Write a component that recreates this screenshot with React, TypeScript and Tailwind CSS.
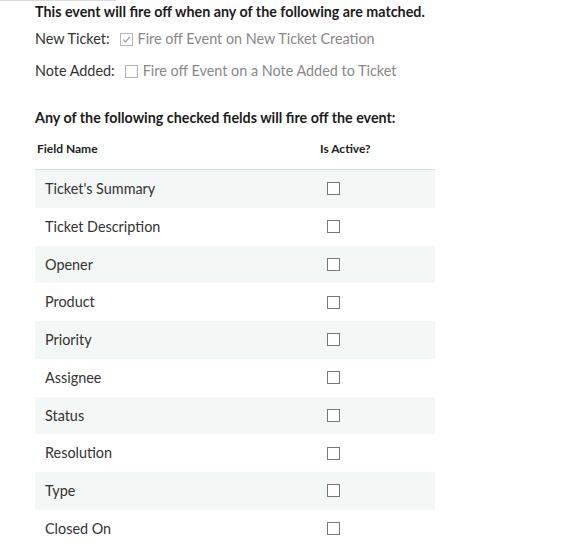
import React from "react";

const rows = [
  "Ticket's Summary",
  "Ticket Description",
  "Opener",
  "Product",
  "Priority",
  "Assignee",
  "Status",
  "Resolution",
  "Type",
  "Closed On",
];

function Box({ checked = false, disabled = false }: { checked?: boolean; disabled?: boolean }) {
  return (
    <span
      className={
        "inline-flex h-[13px] w-[13px] items-center justify-center border bg-white " +
        (disabled ? "border-[#b5b5b5]" : "border-[#767676]")
      }
    >
      {checked && (
        <svg width="9" height="9" viewBox="0 0 9 9" fill="none">
          <path d="M1.2 4.6 L3.5 6.9 L7.8 1.8" stroke="#9a9a9a" strokeWidth="1.2" />
        </svg>
      )}
    </span>
  );
}

export default function App() {
  return (
    <div className="relative min-h-[553px] w-[566px] bg-white text-[#333]" style={{ fontFamily: "Lato, 'Open Sans', sans-serif" }}>
      <div className="absolute left-0 top-0 h-px w-[116px] bg-[#dcdcdc]" />
      <div className="pl-[35px] pt-[3px]">
        <div className="h-[18px] text-[14.3px] font-bold leading-[18px] text-[#1c1c1c]">
          This event will fire off when any of the following are matched.
        </div>
        <div className="mt-[8px] flex h-[20px] items-center text-[14.4px]">
          <span className="text-[#333]">New Ticket:</span>
          <span className="ml-[10px] flex items-center text-[#888]">
            <Box checked disabled />
            <span className="ml-[5px]">Fire off Event on New Ticket Creation</span>
          </span>
        </div>
        <div className="mt-[12px] flex h-[20px] items-center text-[14.4px]">
          <span className="text-[#333]">Note Added:</span>
          <span className="ml-[10px] flex items-center text-[#888]">
            <Box disabled />
            <span className="ml-[5px]">Fire off Event on a Note Added to Ticket</span>
          </span>
        </div>
        <div className="mt-[28px] h-[18px] text-[14.3px] font-bold leading-[18px] text-[#1c1c1c]">
          Any of the following checked fields will fire off the event:
        </div>
        <div className="w-[400px]">
          <div className="flex h-[43px] items-center border-b border-[#dddddd] pt-[2px] text-[12px] font-bold text-[#1c1c1c]">
            <div className="w-[285px] pl-[2px]">Field Name</div>
            <div>Is Active?</div>
          </div>
          {rows.map((r, i) => (
            <div
              key={r}
              className={
                "flex h-[37.75px] items-center text-[14.4px] " + (i % 2 === 0 ? "bg-[#f3f7f5]" : "bg-white")
              }
            >
              <div className="w-[292px] pl-[10px] text-[#333]">{r}</div>
              <Box />
            </div>
          ))}
        </div>
      </div>
    </div>
  );
}
